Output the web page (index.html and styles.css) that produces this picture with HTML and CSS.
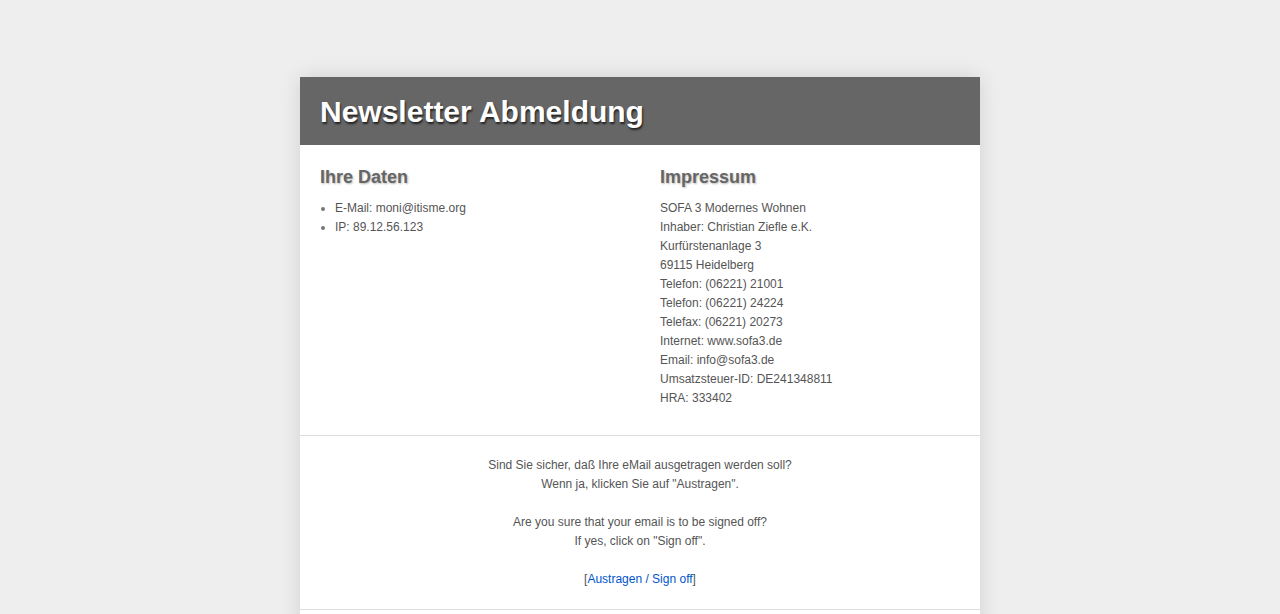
FILE: index.html
```html
<html>
  <head>
    <title>Newsletter Abmeldung</title>
    <link rel="stylesheet" href="styles.css">
  </head>
  <body>
    <div class="page">
      <div class="header">
        <h1>Newsletter Abmeldung</h1>
      </div>
      <div class="info">
        <div class="column">
          <h2>Ihre Daten</h2>
          <ul>
            <li>E-Mail: moni@itisme.org</li>
            <li>IP: 89.12.56.123</li>
          </ul>
        </div>
        <div class="column">
          <h2>Impressum</h2>
          <p>
            SOFA 3 Modernes Wohnen<br>
            Inhaber: Christian Ziefle e.K.<br>
            Kurfürstenanlage 3<br>
            69115 Heidelberg<br>
            Telefon: (06221) 21001<br>
            Telefon: (06221) 24224<br>
            Telefax: (06221) 20273<br>
            Internet: www.sofa3.de<br>
            Email: info@sofa3.de<br>
            Umsatzsteuer-ID: DE241348811<br>
            HRA: 333402
          </p>
        </div>
      </div>
      <div class="confirm">
        <p>
          Sind Sie sicher, daß Ihre eMail ausgetragen werden soll?<br>
          Wenn ja, klicken Sie auf "Austragen".
        </p>
        <p>
          Are you sure that your email is to be signed off?<br>
          If yes, click on "Sign off".
        </p>
        <p>[<a href="#">Austragen / Sign off</a>]</p>
      </div>
      <div class="footer"></div>
    </div>
  </body>
</html>
```

FILE: styles.css
```css
body {
  margin: 0;
  background-color: #eeeeee;
  font-family: "Liberation Sans", Arial, sans-serif;
  font-size: 12px;
  line-height: 19px;
  color: #555555;
}

.page {
  width: 680px;
  margin: 77px auto 0;
  background-color: white;
  box-shadow: 0 0 20px rgba(0, 0, 0, 0.12);
}

.header {
  height: 68px;
  padding: 0 20px;
  background-color: #666666;
  display: flex;
  align-items: center;
}

h1 {
  margin: 0;
  font-size: 30px;
  font-weight: bold;
  color: white;
  text-shadow: 1px 2px 2px #222222;
}

.info {
  display: flex;
  border-bottom: 1px solid #dddddd;
}

.column {
  width: 340px;
  padding: 21px 20px 27px;
}

h2 {
  margin: 0 0 11px;
  font-size: 18px;
  line-height: 22px;
  color: #666666;
  text-shadow: 1px 1px 2px #bbbbbb;
}

ul {
  margin: 0;
  padding-left: 15px;
}

li::marker {
  color: #777777;
  font-size: 12px;
}

p {
  margin: 0;
}

.confirm {
  padding: 20px 20px 20px;
  text-align: center;
  border-bottom: 1px solid #dddddd;
}

.confirm p + p {
  margin-top: 19px;
}

a {
  color: #0055cc;
  text-decoration: none;
}

.footer {
  height: 40px;
}
```
